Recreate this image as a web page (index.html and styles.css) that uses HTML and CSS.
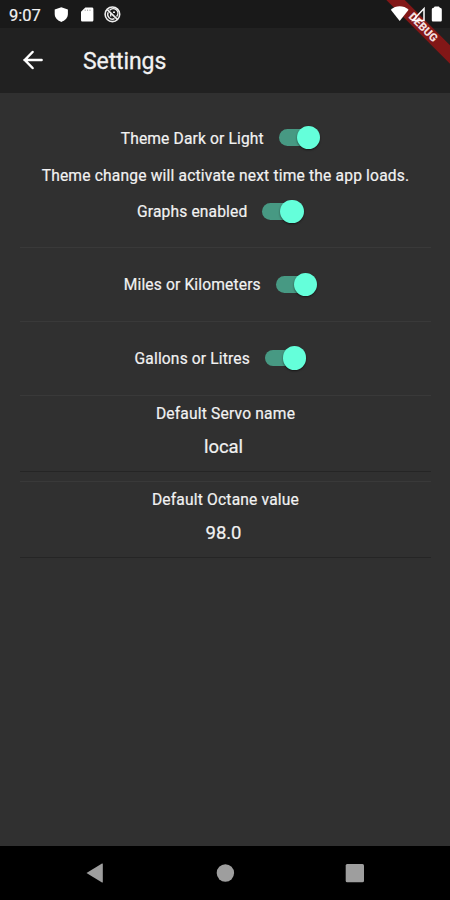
FILE: index.html
```html
<!DOCTYPE html>
<html lang="en">
<head>
<meta charset="utf-8">
<title>Settings</title>
<link rel="stylesheet" href="styles.css">
</head>
<body>
<div class="screen">
  <div class="debug"><span>DEBUG</span></div>
  <header class="status">
    <span class="clock">9:07</span>
    <svg class="status-left" width="70" height="20" viewBox="0 0 70 20">
      <path fill="#fff" d="M9.300 2.200l6.600 2.300v4.600c0 3.700-2.900 6.700-6.600 7.900-3.700-1.200-6.600-4.200-6.600-7.900V4.500z"/>
      <path fill="#fff" d="M33.300 2.600h6.500c1 0 1.600.6 1.600 1.500v10.800c0 1-.6 1.600-1.600 1.600h-9.200c-1 0-1.600-.6-1.600-1.600V6.800z"/>
      <path stroke="#777" stroke-width=".7" d="M33.200 4.600v1.300M35.600 4.600v1.300M38 4.600v1.300"/>
      <g fill="none" stroke="#eee">
        <circle cx="60.400" cy="9.300" r="7.300" stroke-width="1.600"/>
        <path stroke-width="1.700" d="M55.500 4.800l9.900 9.600"/>
        <path stroke-width="1.400" d="M57.600 5.200a4.700 4.700 0 0 1 7 6.300M56.200 7.300a4.700 4.700 0 0 0 6.300 6.300M58.700 11.500v-3M61 7.300h2"/>
      </g>
    </svg>
    <svg class="status-right" width="60" height="24" viewBox="390 0 60 24">
      <path fill="#fff" d="M390.800 9.700c5-4.500 12.800-4.500 17.800 0L399.700 21z"/>
      <path fill="none" stroke="#fff" stroke-width="1.500" d="M424 8.600v11.900h-11.200z"/>
      <path fill="#fff" d="M434.700 6.500h4.200l1 1.300c1.300.1 1.900.8 1.900 1.900v10.400c0 1-.5 1.500-1.500 1.500h-7c-1 0-1.500-.5-1.500-1.500V9.700c0-1.100.6-1.800 1.900-1.900z"/>
    </svg>
  </header>
  <div class="appbar">
    <svg class="back" width="24" height="24" viewBox="0 0 24 24"><path fill="none" stroke="#fff" stroke-width="2.500" stroke-linecap="round" d="M21.600 12H4.500M12.600 4L4.800 12l7.800 8"/></svg>
    <h1>Settings</h1>
  </div>
  <main>
    <div class="row first"><span class="label">Theme Dark or Light</span><span class="switch"><i></i></span></div>
    <p class="note label">Theme change will activate next time the app loads.</p>
    <div class="row graphs"><span class="label">Graphs enabled</span><span class="switch"><i></i></span></div>
    <div class="row ruled"><span class="label">Miles or Kilometers</span><span class="switch"><i></i></span></div>
    <div class="row ruled last"><span class="label">Gallons or Litres</span><span class="switch"><i></i></span></div>
    <section class="field"><div class="label">Default Servo name</div><div class="value">local</div></section>
    <section class="field second"><div class="label">Default Octane value</div><div class="value">98.0</div></section>
  </main>
  <nav>
    <svg width="450" height="54" viewBox="0 0 450 54" fill="#9e9e9e">
      <path d="M86.500 27L102 17.600q.8-.4.800.5v17.800q0 .9-.8.500z"/>
      <circle cx="225.400" cy="27" r="8.700"/>
      <rect x="345.700" y="18" width="18.300" height="18.300" rx="1.500"/>
    </svg>
  </nav>
</div>
</body>
</html>
```
FILE: styles.css
```css
* { box-sizing: border-box; }
body { margin: 0; font-family: Roboto, sans-serif; color: #f2f2f2; background: #303030; }
.screen { position: relative; width: 450px; height: 900px; overflow: hidden; display: flex; flex-direction: column; }
.status { height: 28px; background: #191919; display: flex; align-items: flex-start; }
.clock { width: 52px; padding-left: 9px; font-size: 16.500px; line-height: 31px; letter-spacing: -.05px; white-space: nowrap; -webkit-text-stroke: .2px; }
.status-left { margin-top: 5px; }
.status-right { position: relative; z-index: 3; margin-left: auto; }
.debug { position: absolute; z-index: 2; left: 362.600px; top: 20.800px; width: 120px; height: 13.200px; transform: rotate(45deg); background: #821717; text-align: center; font-size: 11.200px; font-weight: 900; line-height: 13.200px; color: #f3dede; }
.appbar { height: 65px; background: #212121; display: flex; align-items: center; padding-left: 20px; }
.back { margin-bottom: 1px; }
h1 { margin: 0 0 0 39px; font-size: 23px; font-weight: 400; line-height: 28px; letter-spacing: -.1px; padding-top: 2px; -webkit-text-stroke: .3px; }
main { flex: 1; padding: 18px 19px 0 20px; }
.label { font-size: 15.600px; line-height: 20px; letter-spacing: .18px; font-weight: 400; white-space: nowrap; -webkit-text-stroke: .2px; }
.row { display: flex; justify-content: center; align-items: center; height: 53px; padding-right: 2px; }
.row .label { padding-top: 1px; letter-spacing: .14px; }
.first .label { padding-top: 2px; }
.note { margin: 1px 0 0; padding-top: 1px; text-align: center; height: 20px; }
.graphs { height: 53px; }
.ruled { height: 73.500px; border-top: 1px solid #393939; }
.graphs + .ruled { margin-top: 9px; }
.ruled.last { border-bottom: 1px solid #393939; height: 75px; }
.switch { width: 64.500px; height: 24px; display: flex; align-items: center; padding-left: 15px; }
.switch::before { content: ""; width: 36px; height: 16.500px; border-radius: 9px; background: #479983; }
.switch i { width: 23.500px; height: 23.500px; flex: none; margin-left: -18px; border-radius: 50%; background: #64ffda; box-shadow: 0 1px 2px #0008; }
.field { height: 76px; border-bottom: 1px solid #252525; text-align: center; padding-top: 8px; }
.field.second { margin-top: 9px; border-top: 1px solid #393939; height: 77px; }
.value { margin-top: 11px; padding-right: 4px; font-size: 18.500px; line-height: 24px; letter-spacing: -.05px; -webkit-text-stroke: .2px; }
nav { height: 54px; background: #000; }
nav svg { display: block; }
```
